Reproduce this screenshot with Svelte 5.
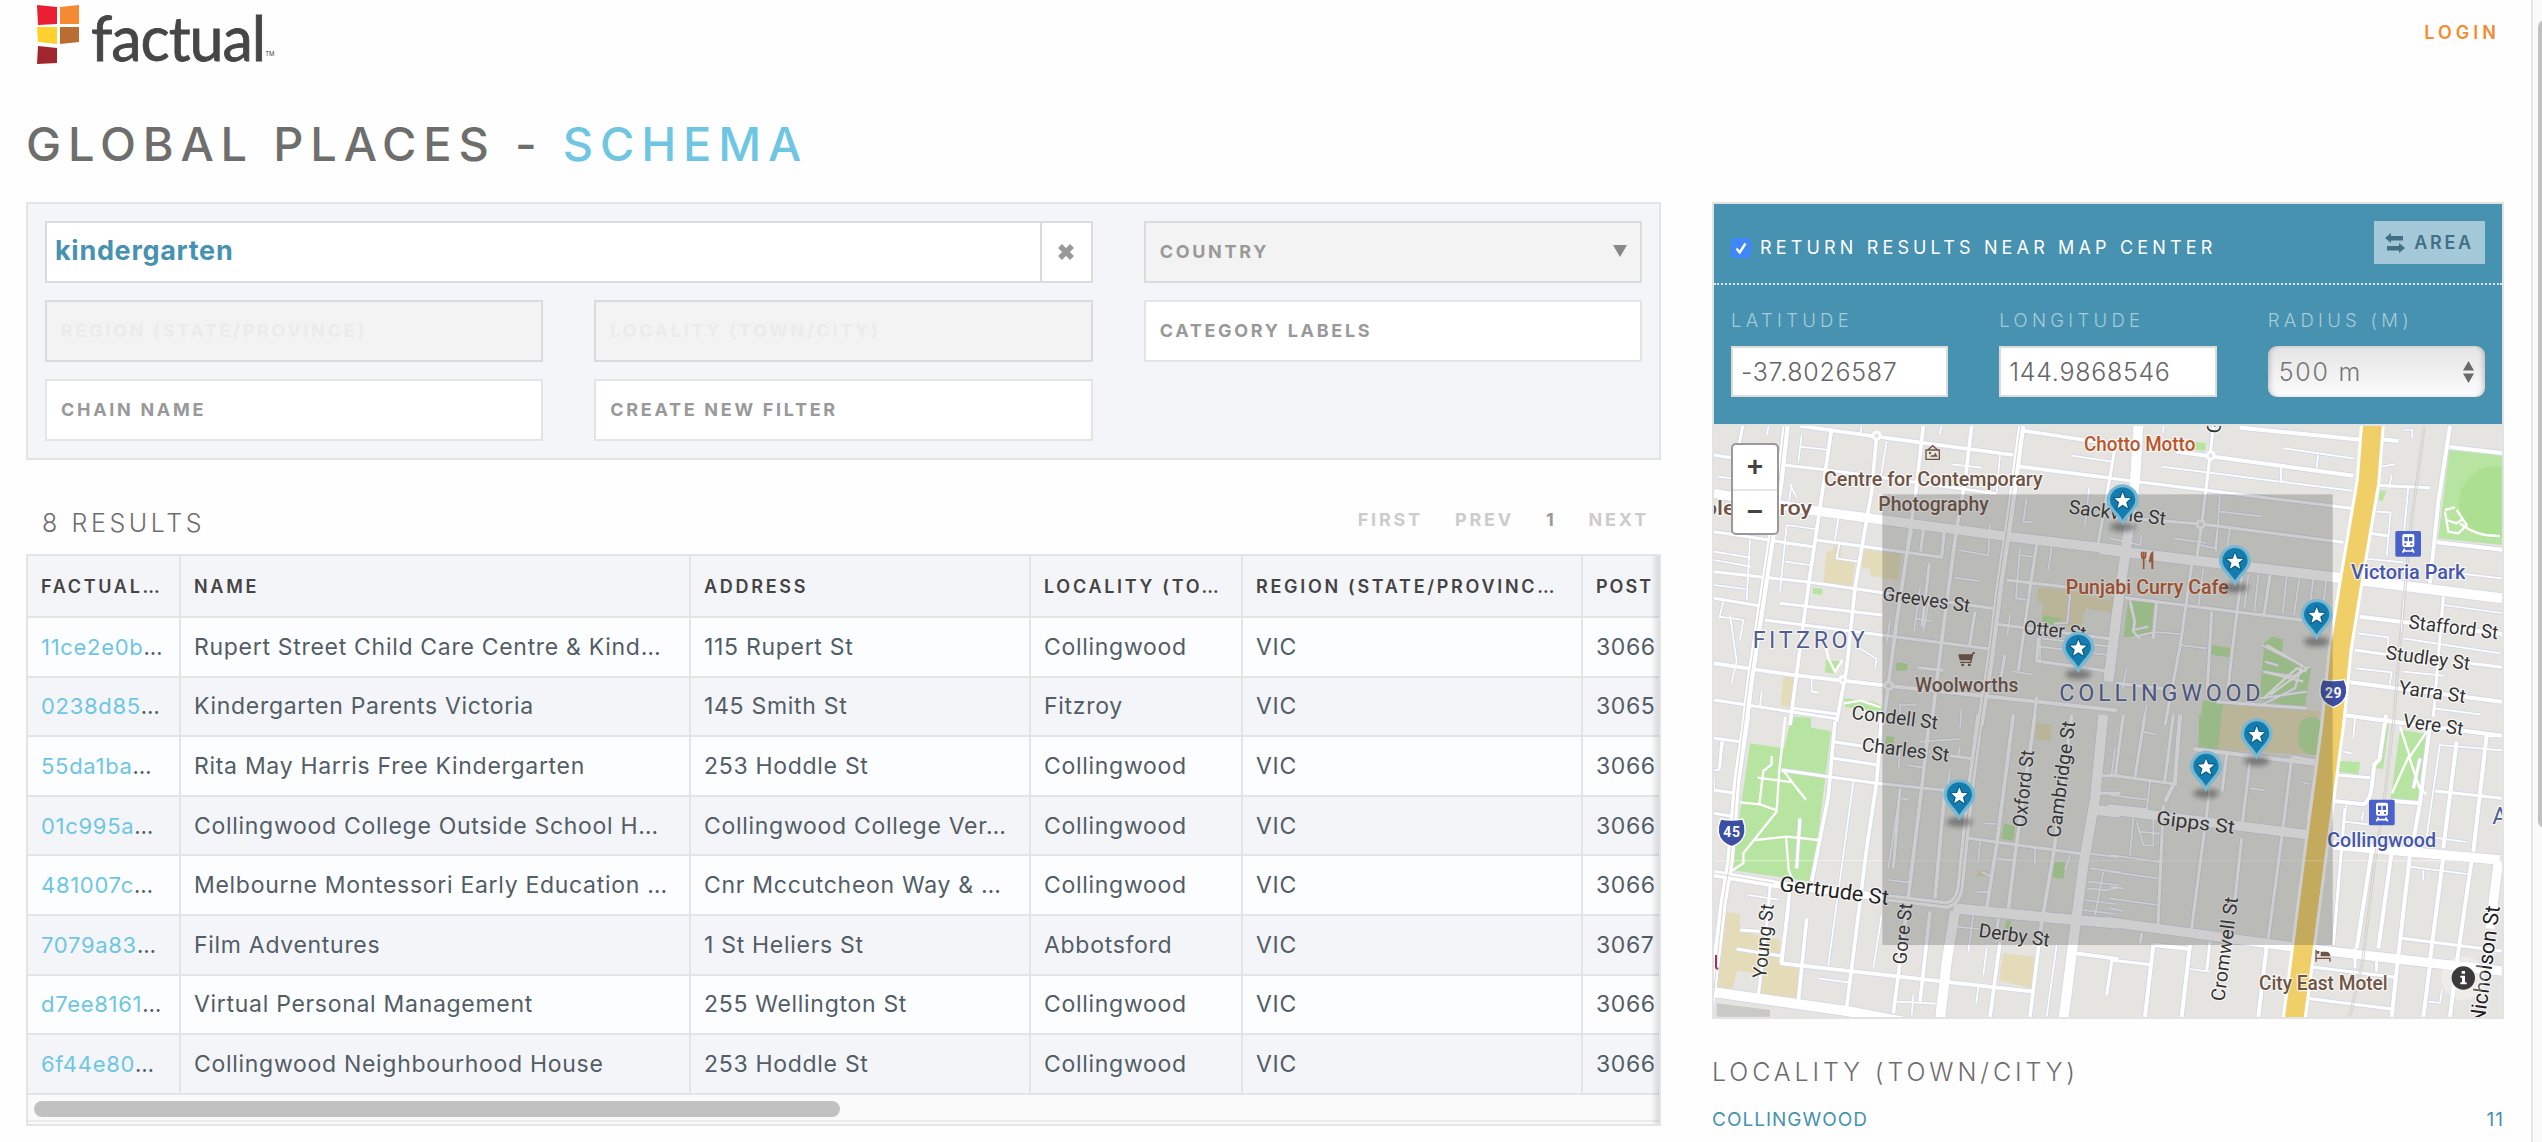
<script>
  const columns = ['FACTUAL…', 'NAME', 'ADDRESS', 'LOCALITY (TO…', 'REGION (STATE/PROVINC…', 'POST'];
  const rows = [
    ['11ce2e0b', 'Rupert Street Child Care Centre & Kind…', '115 Rupert St', 'Collingwood', 'VIC', '3066'],
    ['0238d85', 'Kindergarten Parents Victoria', '145 Smith St', 'Fitzroy', 'VIC', '3065'],
    ['55da1ba', 'Rita May Harris Free Kindergarten', '253 Hoddle St', 'Collingwood', 'VIC', '3066'],
    ['01c995a', 'Collingwood College Outside School H…', 'Collingwood College Ver…', 'Collingwood', 'VIC', '3066'],
    ['481007c', 'Melbourne Montessori Early Education …', 'Cnr Mccutcheon Way & …', 'Collingwood', 'VIC', '3066'],
    ['7079a83', 'Film Adventures', '1 St Heliers St', 'Abbotsford', 'VIC', '3067'],
    ['d7ee8161', 'Virtual Personal Management', '255 Wellington St', 'Collingwood', 'VIC', '3066'],
    ['6f44e80', 'Collingwood Neighbourhood House', '253 Hoddle St', 'Collingwood', 'VIC', '3066'],
  ];

  // Map geometry, in thirds of a pixel, split into four sheets with an offset each.
  const sheets = [
    {
      x: 0, y: 0,
      parks: 'M340 519l28 2-2 18-28-3zM378 735l47 5-25 36-25-4zM590 742l33 4-2 20-34 2zM432 850l88 10 27 12v18l-112-14zM275 905l58 3v30h-62zM1030 600l60 12-30 20-35-14z',
      built: 'M400 392l24 3-2 30 43 20-10 72-85-14 10-92 18-4zM490 402l113 16-8 78-84-14v-20l-26-4zM250 785l33 1-12 90-29-5zM1015 518l95 7 130 35v32l-85-10-14 60-116-32 5-48-20-4z',
      roads: [
        [5, 'M300 95l88 10M295 140l10-80M270 208l20 40M560 80l-20 120M42 410l110 18M42 435l110 20M150 375l-10 180M42 510l95 12M260 330l-20 200M255 385l80 10M255 440l75 10M420 380l-10 50 65 10M260 330l85 12M415 310l-10 65M485 33l-3 20M725 33l-6 25M200 60l6-27M55 185l60 8M275 208l-8 50M60 605l70 10-10 60M90 600l20 140-16 65M70 560l-12 48M1115 122l120 18M755 148l90 10M870 330l-5 90M775 405l90 16M765 488l75 10M980 250l-10 70 28 2M1155 330l12-110M960 400l-12 150 30 4M1055 395l-10 70M960 420l40 6M660 520l-18 130M645 610l50 8M690 540l-20 110M1110 540l-8 84-40 2M1025 670l200 24M1020 695l205 25M1020 645v100M480 700l50 32-5 28M335 790l0 40 22 3M570 620l-10 60M185 830l-5 42M600 930v-60h50M785 880l-5 60M930 600l-8 60M940 770l55 8M900 120l-10 110'],
        [9, 'M128 33l-18 95M42 120l55 9M250 150l140 16 500 70M42 350l170 26 130 20M350 375l375 52 8-78M42 470l288 32 560 80M42 550l135 22M240 565l307 35M195 615l670 86M42 855l368 56M280 880l135 18M655 758l75 8M920 495l185 22M890 628l345 44M1010 390l-20 130-35 248M1245 100l-50 284M1015 668l-5 70 210 30M635 345l-12 60M670 345l-8 64M688 445l-22 190M825 590l-16 100M915 720l-16 90M1010 846l-10 84'],
        [11, 'M395 40l-22 150-43 290-22 160-38 290M530 60l-15 170-30 170-20 120-25 240-30 160M670 33l-20 178-30 209-30 200-25 190-15 120M815 33l-20 167-25 140-40 300-25 200-10 90M300 33l230 32 410 55M970 47l290 44M960 155l270 34M42 745l228 34 290 33 300 32 390 42'],
        [28, 'M42 235l298 52 585 78 335 40'],
        [22, 'M258 33l-18 167-45 300-45 300-15 130M965 33l-35 267-30 200-30 240-30 190'],
      ],
    },
    {
      x: 1230, y: 0,
      parks: 'M1018 105l160 17v268l-193-20zM55 555l77 8-8 98-84 6zM302 690l66 10-6 28-64-10zM485 665l35 7-5 53 30 5 58 30-20 124-135-30 15-170zM280 855l62 10-16 70h-58zM255 80l33 5-3 22-40-5zM810 225l18 4-10 30-12-4z',
      built: 'M342 864l290 24-14 50h-290zM0 545h12v45h-12z',
      roads: [
        [5, 'M155 155l570 72M513 155v45M625 115l-5 45M520 100l210 30M330 240l-12 170M330 290l125 14M190 370l100 14M360 340l-12 80M0 370l90 20 5-30M270 390l45 10 8-60M780 160l75 -12M845 180l-8 40M800 290l42 2-12 130M895 215l-20 210M885 450l-10 200M760 430l120 12M1000 470l176 20M1000 570l176 24M745 655l90 12-4 50M740 760l105 12-6 36M880 670l290 45M880 770l120 12M970 880l140 18M885 45h22v25M160 33v20M415 480l-12 100M445 480l-12 110M530 485l-12 110M568 490l-16 110M610 490l-14 110M650 490l-16 120M280 460l-14 110M60 555l14 60-4 30 45 -10M75 665l60-14 75 6M110 870l-12 60M50 760l-12 60M210 690l80 10M455 690l60 30 60 30-20 70-100 50M460 770l90 14 50-30M465 740l40 12M450 850l140 -20'],
        [9, 'M310 33l-10 90-25 207-14 92M0 190l725 90M0 305l275 22 425 55M45 548l355 45 250 32M780 210l180 8M245 450l-34 240-46 240M395 480l-30 240-14 130M480 480l-18 120M305 590l-14 250M140 560l-10 110M1000 545l-30 360M20 805l140 16M320 860l270 20M700 900l180 26M735 705l100 14M1078 745l98 12M780 355l55 8'],
        [12, 'M200 110l530 72M390 38l370 37M780 70l85 8M1020 33l-35 227-25 245M1018 96l160 18M980 382l196 22M750 605l426 52M720 802l456 58'],
        [30, 'M85 33l-10 167-20 150-35 250-25 200'],
        [30, 'M-30 402l730 88 476 60'],
      ],
    },
    {
      x: 0, y: 900,
      parks: 'M275 5l58 5v28l60 10-56 452-242-35 55-380 102 15zM560 62l22 4-2 24-24-4zM912 325l33 8-5 44-36-6zM1062 440l33 2-4 50-36-6zM920 615l14 2-6 26-14-4z',
      built: 'M80 592l40 5-2 28 10 26 112 24-4 68 64 20-6 88-114-14 4-60-72-10-14 54-48-4zM910 715l93 10-6 96-66-16-34-10zM1010 25l45 4-4 50-46-8zM832 465l32 2-3 15-30 3z',
      roads: [
        [5, 'M460 200l-75 550M545 600l-25 160M600 230l-35 230M605 250l20 4M565 495l65 8M750 165l-15 100M660 80l120-8M780 95l-6 30M620 150l50 8M600 100l-4 60M42 165h20M70 80l-15 85M42 190v40M890 430l50 6M850 325l40 2M840 380l-5 60M830 530l40 2M1005 400v50M1165 415l90 12M1170 460l90 12M1165 500l90 10M1160 520l60 6 35-10M1155 555l90 12M1150 585l95 12M1210 470l-25 130M1070 690l-30 215M770 635l90 10M820 600l-15 110M860 700l-10 80M835 810l-6 55M355 790l90 12M640 840l-5 60M590 860l120 6M145 540l90 14M1110 420l-14 45M845 470l30 16M1245 100l-10 80'],
        [9, 'M42 70l80 10M42 225l55 8M42 295l50 8M65 80l-6 80M400 80l90 14M400 130l135 20M245 165l140 20 145 20 230 24M750 122l75 10M805 370l345 47M600 220l-20 240M210 515l-10 120-25 205M120 645l85 6M110 702l130 20M895 610l-8 70M1190 235h70M1200 182h60M1235 740l-15 100M300 310l-10 150'],
        [11, 'M405 20l-20 224-50 256M270 520l-25 225 755 85M320 610l-25 250M545 0l-15 200-30 200-20 160-25 200-15 115M690 0l-25 220-40 325-25 195-20 155M690 590l-30 270M735 220l-30 330M940 0l-50 390-30 190M1005 0l-60 420-20 165M900 680l-30 225M1115 0l-55 420-30 175M1025 620l-35 285M265 580l-22 165M1130 715l125 17'],
        [22, 'M140 0l-30 200-20 240-20 120-40 330M840 0l-30 230-30 290q-8 45-42 50l-178-22-330-40-188-32'],
        [30, 'M30 830l410 58 180 34M1190 285l70 8M1210 0l-25 250-35 200-25 190-35 275M765 590l-25 150-20 175M760 580l180 18 320 28'],
      ],
    },
    {
      x: 1230, y: 900,
      parks: 'M268 0h66l-9 105-60-6zM570 20q40-30 62 0l-10 100q-62 0-58-60zM817 22l20 4-18 136-20-3zM870 45l80 12-22 206-86-14zM690 138l60 4-4 36-60-8zM928 670l25 2-2 14-26-2z',
      built: 'M334-5h295l-14 125-290-16z',
      roads: [
        [5, 'M0 240l110 14M0 270l110 12M120 200l-10 90M70 310l-10 110M0 420l160 22M0 470l155 22M0 515l40 5M0 550l140 20M80 320l20 70 30 2v-80M85 350l65 6M420 220l45 6M575 200l24 8M610 200l-18 115M0 580l40 8M710 270l-10 50 75 8M760 290l-5 25M900 455l170 22M940 465v30M990 90l186 16M990 85l-40 280 120 16M100 50l35 8M735 10l-5 60M700 110l25 5M300 770l-60-8M955 860l35 4 6-40'],
        [9, 'M0 180l200 28M40 0l-24 180M105 0l-30 185M190 0l-26 200M160 270l-16 360M300 220l-55 420M350 120l-14 110M420 140l-25 200M395 370l-25 230M545 130l-30 240-40 300M545 125l70 12M95 655l-4 30M0 735l125 14M300 680l-10 90M600 755l258 32M590 850l255 32M735 700v60M800 720v50M680 180l100 8M875 670l300 38M975 228l200 22M705 280l-35 410M930 130l-20 90'],
        [12, 'M250 102l365 44M210 0l-15 200-30 60M130 690l-25 215M240 690l-25 215M130 690l110 12M470 695l-25 210M785 410l-45 290M845 410l-40 290M900 420l-35 300-20 185M960 750l-20 155M1000 425l-40 310M1085 435l-45 310-20 160M1040 80l-40 320M1130 60l-40 350M670 258l90 10q20-10 25-50l8-70 15-15 20-133M845 258l85 7M960 30l-30 235-25 140M700 0l476 62'],
        [28, 'M-10 283l600 76M670 390l500 45M1165 440l-25 200M-10 620l560 76 626 72'],
      ],
    },
  ];

  const footpaths = [
    'M215 1023v25l-25 20-12 100M173 1088l107 14M120 1162l60 6 50 18 8-120 18-160M232 1187l-102 128v30l-35 22M165 1275l95-10 98 10M258 1265l8 100 20 50M250 1066l30 40 38 48M375 685l10 45 20 40 22-35M432 865l50-8 60 20',
    'M2235 285l30-8M2235 290l10 60 30 5 25-25-30-45M2240 315l30 10 20-15M2280 325q50 40 120 38M1290 560l14 60-4 30 20 22M1700 690l120 70-110 80M1690 770l120 30M1690 850l100-90 30 10M2100 935l28 85-52 115M2180 950l-52 78 30 90 20 20',
  ];

  // kind, text, x, baseline, length, angle
  const labels = [
    ['poi', 'Centre for Contemporary', 372, 213, 656, 0],
    ['poi', 'Photography', 535, 288, 331, 0],
    ['poi', 'ple Fitzroy', 12, 300, 324, 0],
    ['food', 'Chotto Motto', 1152, 108, 334, 0],
    ['food', 'Punjabi Curry Cafe', 1097, 537, 489, 0],
    ['poi', 'Woolworths', 645, 832, 310, 0],
    ['poi', 'City East Motel', 1677, 1725, 386, 0],
    ['rail', 'Victoria Park', 1953, 492, 343, 0],
    ['rail', 'Collingwood', 1882, 1295, 326, 0],
    ['area', 'FITZROY', 158, 698, 336, 0],
    ['area', 'COLLINGWOOD', 1078, 858, 604, 0],
    ['area', 'A', 2377, 1227, 46, 0],
    ['street', 'Sackville St', 1105, 295, 292, 7],
    ['street', 'Greeves St', 545, 555, 265, 8],
    ['street', 'Otter St', 970, 656, 188, 6],
    ['street', 'Condell St', 453, 911, 260, 7],
    ['street', 'Charles St', 484, 1008, 263, 7],
    ['main', 'Gertrude St', 236, 1427, 330, 7.5],
    ['street', 'Derby St', 834, 1565, 214, 8],
    ['street', 'Gipps St', 1367, 1228, 236, 7],
    ['street', 'Stafford St', 2124, 640, 270, 7],
    ['street', 'Studley St', 2055, 732, 255, 7.5],
    ['street', 'Yarra St', 2094, 836, 202, 8],
    ['street', 'Vere St', 2107, 936, 182, 8],
    ['street', 'Young St', 198, 1692, 224, -84],
    ['street', 'Gore St', 618, 1650, 184, -84],
    ['street', 'Oxford St', 978, 1238, 232, -84],
    ['street', 'Cambridge St', 1080, 1270, 352, -82.5],
    ['street', 'Cromwell St', 1573, 1760, 314, -82.5],
    ['main', 'Nicholson St', 2353, 1830, 358, -82.5],
    ['street', 'Gr', 1560, 57, 60, -84],
  ];

  const pins = [[1268, 258], [1605, 440], [1850, 602], [1135, 700], [1670, 960], [1518, 1057], [778, 1143]];
</script>

<div class="page">
  <div class="content">
    <header>
      <div class="logo">
        <svg class="mark" width="44" height="60" viewBox="0 0 44 60">
          <path fill="#ea1d33" d="M1 0l20 2v17l-19 1z" />
          <path fill="#f58a33" d="M24 2l19-2v19l-19 0z" />
          <path fill="#ffd12f" d="M1 22h20v17l-19-2z" />
          <path fill="#b96d30" d="M24 22h19v15l-19 2z" />
          <path fill="#a1252c" d="M2 41l19 2v15l-20 1z" />
        </svg>
        <span class="word">factual</span><span class="tm">TM</span>
      </div>
      <a class="login" href="#login">LOGIN</a>
    </header>

    <h1>GLOBAL PLACES - <span>SCHEMA</span></h1>

    <div class="columns">
      <main>
        <section class="filters">
          <div class="field search">
            <strong>kindergarten</strong>
            <span class="clear">
              <svg width="18" height="18" viewBox="0 0 18 18"><path d="M3 3l12 12M15 3l-12 12" /></svg>
            </span>
          </div>
          <div class="field shaded">COUNTRY<i class="caret"></i></div>
          <div class="field shaded off">REGION (STATE/PROVINCE)</div>
          <div class="field shaded off">LOCALITY (TOWN/CITY)</div>
          <div class="field">CATEGORY LABELS</div>
          <div class="field">CHAIN NAME</div>
          <div class="field">CREATE NEW FILTER</div>
        </section>

        <div class="summary">
          <span class="count">8 RESULTS</span>
          <nav><span>FIRST</span><span>PREV</span><span class="current">1</span><span>NEXT</span></nav>
        </div>

        <section class="table">
          <div class="row head">
            {#each columns as c}<div class="cell">{c}</div>{/each}
          </div>
          {#each rows as r}
            <div class="row">
              {#each r as value, i}
                <div class="cell" class:id={i === 0}>{#if i === 0}<a href="#{value}">{value}</a>…{:else}{value}{/if}</div>
              {/each}
            </div>
          {/each}
          <div class="hscroll"><div class="thumb"></div></div>
        </section>
      </main>

      <aside>
        <section class="geo">
          <div class="near">
            <span class="check"><svg width="20" height="20" viewBox="0 0 20 20"><path d="M5.5 10.5l3.2 4L14.5 5.500" /></svg></span>
            <span class="near-label">RETURN RESULTS NEAR MAP CENTER</span>
            <span class="area-button">
              <svg width="20" height="22" viewBox="0 0 20 22"><path d="M0 6l6-5v3h12v4.500H6v2.500zM20 16l-6-5v3H2v4.500h12v2.500z" /></svg>AREA
            </span>
          </div>
          <div class="coords">
            <div><span class="lab">LATITUDE</span><div class="input">-37.8026587</div></div>
            <div><span class="lab">LONGITUDE</span><div class="input">144.9868546</div></div>
            <div>
              <span class="lab">RADIUS (M)</span>
              <div class="select">500 m<svg width="11" height="22" viewBox="0 0 11 22"><path d="M0 9.500L5.500 0 11 9.500zM0 12.500L5.500 22 11 12.500z" /></svg></div>
            </div>
          </div>

          <div class="map">
            <svg width="788" height="591" viewBox="42 33 2364 1773">
              <defs>
                <filter id="soft" x="-50%" y="-100%" width="200%" height="300%"><feGaussianBlur stdDeviation="8" /></filter>
              </defs>
              <rect x="42" y="33" width="2364" height="1773" fill="#e5e4e0" />
              {#each sheets as s}
                <g transform="translate({s.x} {s.y})">
                  <path d={s.built} fill="#e4dcb8" />
                  <path d={s.parks} fill="#b8e4a1" />
                </g>
              {/each}
              <circle cx="2385" cy="262" r="108" fill="#acdf92" />
              {#each sheets as s}
                <g transform="translate({s.x} {s.y})" class="casing">
                  {#each s.roads as [w, d]}<path {d} stroke-width={w + 5} />{/each}
                </g>
              {/each}
              {#each sheets as s}
                <g transform="translate({s.x} {s.y})" class="road">
                  {#each s.roads as [w, d]}<path {d} stroke-width={w} />{/each}
                </g>
              {/each}
              <g class="road">
                {#each footpaths as d}<path {d} stroke-width="7" />{/each}
                <circle cx="530" cy="62" r="11" /><circle cx="428" cy="794" r="9" /><circle cx="566" cy="812" r="11" />
                <circle cx="1532" cy="122" r="11" /><circle cx="1502" cy="328" r="11" />
              </g>
              <g class="rail-line">
                <path d="M255 33l-18 167-45 300-45 300-37 300-20 240-20 120-35 330M962 33l-35 267-30 200-30 240-57 390-30 290q-8 45-42 50l-178-22M42 1375l180 30M2170 33l-40 297-35 370-15 200-30 250-30 200-35 290-40 170M2176 33l-40 297-35 370-15 200-30 250-30 200-35 290-40 170" />
              </g>
              <path class="hwy-edge" d="M2018 20l-14 180-49 290-34 210-23 230-54 406-62 480" />
              <path class="hwy" d="M2018 20l-14 180-49 290-34 210-23 230-54 406-62 480" />
              <path d="M50 1765l160 20v20H50z" fill="#c9c9c6" />
              <path d="M42 1337h2364" stroke="#fff" stroke-opacity=".4" stroke-width="4" />

              {#each labels as [kind, text, x, y, len, angle]}
                <text class={kind} {x} {y} textLength={len} lengthAdjust={kind === 'area' ? 'spacing' : 'spacingAndGlyphs'} transform="rotate({angle} {x} {y})">{text}</text>
              {/each}
              <path d="M48 1620v36q0 5 7 5" fill="none" stroke="#a8325a" stroke-width="6" />

              <!-- gallery, cart, cutlery and bed markers -->
              <g class="glyph">
                <path d="M678 105h40v28h-40zM684 104l14-12 14 12" /><path class="solid" d="M690 125l6-6 4 3 6-9 7 12zM687 111h6v6h-6z" />
                <path d="M780 742h32l7-28h6" /><path class="solid" d="M775 718h43l-6 18h-33zM784 746h8v7h-8zM804 746h8v7h-8z" />
                <path d="M1848 1604v36M1848 1630h42v10" /><path class="solid" d="M1862 1610h18q11 2 11 14h-29zM1850 1608h8v8h-8z" />
              </g>
              <g class="cutlery"><path d="M1325 410v12q0 8 6 8t6-8v-12M1331 410v52" /><path class="solid" d="M1360 408v54h-6v-20h-7q0-30 13-34z" /></g>

              <g class="station">
                {#each [[2086, 348], [2007, 1154]] as [x, y]}
                  <g transform="translate({x} {y})">
                    <rect width="77" height="77" rx="5" fill="#4a61c9" />
                    <path fill="#fff" fill-rule="evenodd" d="M27 9h24q6 0 6 6v28q0 5-6 5H27q-6 0-6-5V15q0-6 6-6zM27 18v13h10V18zM41 18v13h10V18zM27 37v5h6v-5zM45 37v5h6v-5z" />
                    <path stroke="#fff" stroke-width="5" fill="none" d="M28 53l-6 12M50 53l6 12M25 60h28" />
                  </g>
                {/each}
              </g>
              {#each [['45', 95, 1252], ['29', 1900, 834]] as [n, x, y]}
                <g transform="translate({x} {y})">
                  <path d="M-33-40Q0-34 33-40Q42-20 40 0Q36 30 0 43Q-36 30-40 0Q-42-20-33-40z" fill="#3d4fa5" stroke="#fff" stroke-width="4" />
                  <text class="shield" y="15" textLength="50">{n}</text>
                </g>
              {/each}

              <rect x="547" y="238" width="1351" height="1352" fill="#3c3c3c" fill-opacity=".25" />

              {#each pins as [x, y]}
                <g transform="translate({x} {y})">
                  <ellipse cx="0" cy="78" rx="38" ry="14" fill="#222" fill-opacity=".45" filter="url(#soft)" />
                  <path d="M0 74C-14 46-48 24-48-2A48 48 0 0 1 48-2C48 24 14 46 0 74z" fill="#7ab8d1" />
                  <path d="M0 56C-12 36-38 18-38-3A38 38 0 0 1 38-3C38 18 12 36 0 56z" fill="#147db0" />
                  <path d="M0-26l6.500 17 18 1-14 11.500 5 18L0 11.500l-15.500 10 5-18-14-11.500 18-1z" fill="#fff" stroke="#0e5f88" stroke-width="8" paint-order="stroke" stroke-linejoin="round" />
                </g>
              {/each}

              <circle cx="2290" cy="1689" r="66" fill="#fff" fill-opacity=".3" />
              <circle cx="2290" cy="1689" r="35" fill="#3a3a3a" />
              <path d="M2285 1668h10v8h-10zM2281 1682h14v20h5v6h-19v-6h5v-14h-5z" fill="#fff" />
            </svg>
            <div class="zoomer"><span>+</span><span>−</span></div>
          </div>
        </section>

        <h2>LOCALITY (TOWN/CITY)</h2>
        <div class="facet"><span>COLLINGWOOD</span><span>11</span></div>
      </aside>
    </div>
  </div>
  <div class="vscroll"><div class="thumb"></div></div>
</div>

<style>
  :global(body) { margin: 0; background: #fefefe; overflow: hidden; }
  .page { display: flex; height: 1142px; font-family: Inter, 'Open Sans', sans-serif; color: #525d66; overflow: hidden; }
  .page, .page * { box-sizing: border-box; }
  a { text-decoration: none; color: inherit; }
  .content { width: 2531px; padding: 0 27px 0 26px; }
  header { display: flex; justify-content: space-between; align-items: flex-start; height: 95px; }
  .logo { display: flex; height: 70px; padding: 5px 0 0 10px; }
  .mark { flex: none; }
  .word { font: 400 61px/70px Lato, sans-serif; color: #464646; letter-spacing: -1px; margin: -2px 0 0 11px; -webkit-text-stroke: .8px #464646; }
  .tm { font: 400 6px/8px Inter, sans-serif; margin: 45px 0 0 0; color: #464646; }
  .login { font-size: 18px; line-height: 22px; font-weight: 600; letter-spacing: 4px; color: #f68b2d; padding: 22px 4px 0 0; }
  h1 { margin: 0; height: 107px; padding-top: 20px; font-size: 47px; line-height: 58px; font-weight: 500; letter-spacing: 6.800px; color: #6e6e6d; white-space: nowrap; }
  h1 span { color: #6ec6e3; }

  .columns { display: flex; gap: 51px; }
  main { width: 1635px; flex: none; }
  .filters { display: grid; grid-template-columns: repeat(3, 1fr); grid-auto-rows: 62px; gap: 17px 51px; padding: 17px; height: 258px; border: 2px solid #e3e4e5; background: #f4f5f8; }
  .field { display: flex; align-items: center; padding: 0 14px; border: 2px solid #e3e4e5; background: #fff; font-size: 18px; font-weight: 700; letter-spacing: 2.700px; color: #999; white-space: nowrap; padding-bottom: 2px; }
  .search { grid-column: span 2; padding: 0 0 0 8px; justify-content: space-between; border-color: #dadbdd; }
  .search strong { font-size: 27px; font-weight: 700; letter-spacing: .7px; color: #4792b0; padding-bottom: 3px; }
  .clear { display: flex; align-items: center; justify-content: center; width: 51px; height: 58px; border-left: 2px solid #dadbdd; }
  .clear path { stroke: #999; stroke-width: 5.500; }
  .shaded { background: #f3f3f3; border-color: #dadbdd; justify-content: space-between; }
  .off { color: #ebebeb; }
  .caret { width: 0; height: 0; margin-right: -1px; border: 7px solid transparent; border-top: 12px solid #888; border-bottom: 0; }

  .summary { display: flex; justify-content: space-between; height: 94px; padding: 46px 12px 0 16px; }
  .count { font-size: 25px; line-height: 34px; font-weight: 300; letter-spacing: 3.600px; color: #6e6e6d; }
  nav { display: flex; gap: 32px; font-size: 18px; line-height: 27px; font-weight: 700; letter-spacing: 2.800px; color: #ccc; }
  .current { color: #999; }

  .table { position: relative; height: 572px; border: 2px solid #e3e4e5; background: #fafafa; overflow: hidden; }
  .table::after { content: ''; position: absolute; inset: 0 0 0 auto; width: 8px; background: linear-gradient(to right, transparent, rgba(0, 0, 0, .12)); }
  .row { display: grid; grid-template-columns: 153px 510px 340px 212px 340px 78px; height: 59.6px; border-bottom: 2px solid #e3e4e5; background: #fcfdfe; font-size: 23px; letter-spacing: .7px; }
  .row:nth-child(odd) { background: #f4f5f8; }
  .head { height: 62px; font-size: 18px; font-weight: 600; letter-spacing: 2.700px; color: #444; }
  .cell { display: flex; align-items: center; padding-left: 13px; border-right: 2px solid #e3e4e5; white-space: pre; overflow: hidden; }
  .cell:last-child { border-right: 0; letter-spacing: .6px; }
  .head .cell:last-child { letter-spacing: 2px; }
  .id { font-size: 22px; }
  .cell a { color: #6ec6e3; }
  .hscroll { height: 27px; padding: 6px; border-bottom: 2px solid #ececec; }
  .hscroll .thumb { width: 806px; height: 16px; border-radius: 8px; background: #c1c1c1; }

  aside { width: 792px; flex: none; }
  .geo { border: 2px solid #e3e3e3; background: #4792b0; height: 817px; }
  .near { display: flex; align-items: flex-start; height: 81px; padding: 17px 17px 0; border-bottom: 2px dotted #d9e8ee; }
  .check { display: flex; width: 20px; height: 20px; margin-top: 17px; border-radius: 4px; background: #3f87f8; }
  .check path { fill: none; stroke: #fff; stroke-width: 2.4; }
  .near-label { margin: 14px 0 0 9px; font-size: 18px; line-height: 26px; font-weight: 400; letter-spacing: 4.150px; color: #fff; white-space: nowrap; }
  .area-button { display: flex; align-items: center; justify-content: center; gap: 9px; width: 111px; height: 43px; margin-left: auto; background: #a3c8d8; color: #416f85; font-size: 18px; font-weight: 600; letter-spacing: 2.700px; }
  .area-button path { fill: #416f85; }
  .coords { display: grid; grid-template-columns: repeat(3, 1fr); gap: 51px; height: 139px; padding: 22px 17px 0; }
  .lab { display: block; height: 39px; font-size: 18.500px; line-height: 26px; font-weight: 300; letter-spacing: 4.300px; color: #a6cbd9; white-space: nowrap; }
  .input { height: 51px; padding: 2px 8px 0; border: 2px solid #dcdcdc; background: #fff; font-size: 25px; line-height: 44px; font-weight: 300; letter-spacing: .7px; color: #666; }
  .select { display: flex; align-items: center; justify-content: space-between; height: 51px; padding: 0 11px 0 11px; border-radius: 9px; background: linear-gradient(#e4e4e4, #fcfcfc); box-shadow: inset 4px 0 5px -2px rgba(0, 0, 0, .2), inset -4px 0 5px -2px rgba(0, 0, 0, .2); font-size: 25px; font-weight: 300; letter-spacing: 1.800px; color: #777; }
  .select path { fill: #6a6a6a; }

  .map { position: relative; height: 593px; border-top: 2px solid #e3e3e3; overflow: hidden; }
  .map > svg { display: block; }
  .casing path { fill: none; stroke: #d3d7e6; stroke-linejoin: round; }
  .road path { fill: none; stroke: #fff; stroke-linejoin: round; }
  .road circle { fill: #e5e4e0; stroke: #fff; stroke-width: 8; }
  .rail-line path { fill: none; stroke: #cfcdc6; stroke-width: 2.5; }
  .hwy-edge { fill: none; stroke: #fff; stroke-width: 74; }
  .hwy { fill: none; stroke: #f1cf68; stroke-width: 56; }
  .map text { font-family: Roboto, 'Liberation Sans', sans-serif; font-size: 58px; font-weight: 500; paint-order: stroke; stroke: #fff; stroke-opacity: .75; stroke-width: 7; stroke-linejoin: round; }
  .map text.poi { fill: #6f5445; }
  .map text.food { fill: #b9562a; }
  .map text.rail { fill: #4556ae; }
  .map text.area { fill: #525e93; font-size: 70px; font-weight: 400; }
  .map text.street { fill: #333; font-weight: 400; font-size: 58px; }
  .map text.main { fill: #222; font-weight: 400; font-size: 64px; }
  .map text.shield { fill: #fff; stroke: none; font-size: 42px; font-weight: 700; text-anchor: middle; }
  .glyph path { fill: none; stroke: #6f5445; stroke-width: 4; }
  .glyph path.solid { fill: #6f5445; stroke: none; }
  .cutlery path { fill: none; stroke: #b9623c; stroke-width: 5; }
  .cutlery path.solid { fill: #b9623c; stroke: none; }
  .zoomer { position: absolute; left: 17px; top: 17px; width: 48px; height: 92px; border: 2px solid #999; border-radius: 5px; background: #fff; }
  .zoomer span { display: flex; align-items: center; justify-content: center; height: 44px; font: 700 28px/1 'Liberation Sans', sans-serif; color: #444; }
  .zoomer span + span { border-top: 2px solid #e6e6e6; }

  h2 { margin: 36px 0 0; font-size: 25px; line-height: 34px; font-weight: 300; letter-spacing: 3.900px; color: #6e6e6d; }
  .facet { display: flex; justify-content: space-between; margin-top: 18px; font-size: 19px; line-height: 26px; letter-spacing: 1px; color: #4792b0; }

  .vscroll { width: 11px; border-left: 2px solid #e6e6e6; background: #fafafa; padding: 20px 0 0 5px; }
  .vscroll .thumb { width: 14px; height: 808px; border-radius: 7px; background: #c1c1c1; }
</style>
